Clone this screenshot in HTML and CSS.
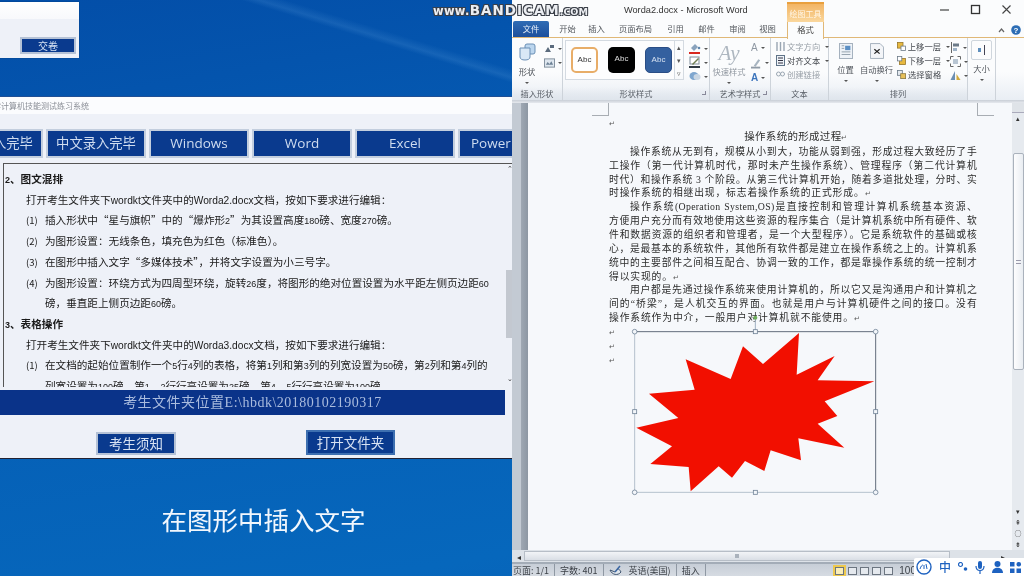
FILE: index.html
```html
<!DOCTYPE html>
<html lang="zh">
<head>
<meta charset="utf-8">
<title>Worda2.docx - Microsoft Word</title>
<link rel="stylesheet" href="styles.css">
</head>
<body>
<div class="desktop">
  <div class="swoosh"></div>

  <section class="dialog">
    <div class="dialog-top"></div>
    <div class="dialog-foot"><button class="btn btn-submit">交卷</button></div>
  </section>

  <section class="exam">
    <div class="exam-title">学计算机技能测试练习系统</div>
    <nav class="exam-tabs">
      <span class="etab etab-cn">英文录入完毕</span>
      <span class="etab etab-cn">中文录入完毕</span>
      <span class="etab">Windows</span>
      <span class="etab">Word</span>
      <span class="etab">Excel</span>
      <span class="etab etab-last">PowerPoint</span>
    </nav>
    <div class="task-box">
      <div class="task-text">
        <p class="h"><span class="la">2</span>、图文混排</p>
        <p class="b">打开考生文件夹下<span class="la-n">wordkt</span>文件夹中的<span class="la-n">Worda2.docx</span>文档，按如下要求进行编辑：</p>
        <div class="li"><i>(1)</i><span>插入形状中“星与旗帜”中的“爆炸形<span class="la">2</span>”为其设置高度<span class="la">180</span>磅、宽度<span class="la">270</span>磅。</span></div>
        <div class="li"><i>(2)</i><span>为图形设置：无线条色，填充色为红色（标准色）。</span></div>
        <div class="li"><i>(3)</i><span>在图形中插入文字“多媒体技术”，并将文字设置为小三号字。</span></div>
        <div class="li"><i>(4)</i><span>为图形设置：环绕方式为四周型环绕，旋转<span class="la">26</span>度，将图形的绝对位置设置为水平距左侧页边距<span class="la">60</span>磅，垂直距上侧页边距<span class="la">60</span>磅。</span></div>
        <p class="h"><span class="la">3</span>、表格操作</p>
        <p class="b">打开考生文件夹下<span class="la-n">wordkt</span>文件夹中的<span class="la-n">Worda3.docx</span>文档，按如下要求进行编辑：</p>
        <div class="li"><i>(1)</i><span>在文档的起始位置制作一个<span class="la">5</span>行<span class="la">4</span>列的表格，将第<span class="la">1</span>列和第<span class="la">3</span>列的列宽设置为<span class="la">50</span>磅，第<span class="la">2</span>列和第<span class="la">4</span>列的<br>列宽设置为<span class="la">100</span>磅，第<span class="la">1</span>、<span class="la">2</span>行行高设置为<span class="la">25</span>磅，第<span class="la">4</span>、<span class="la">5</span>行行高设置为<span class="la">100</span>磅。</span></div>
      </div>
      <div class="task-scroll">
        <span class="arr">⌃</span>
        <span class="thumb"></span>
        <span class="arr arr-down">⌄</span>
      </div>
    </div>
    <div class="path-bar">考生文件夹位置E:\hbdk\20180102190317</div>
    <div class="exam-actions">
      <button class="btn btn-notice">考生须知</button>
      <button class="btn btn-open">打开文件夹</button>
    </div>
  </section>

  <div class="caption">在图形中插入文字</div>

  <section class="word">
    <header class="w-title">
      <span class="w-name">Worda2.docx - Microsoft Word</span>
      <div class="win-ctrls">
        <svg width="12" height="12" viewBox="0 0 12 12"><path d="M1 6h9" stroke="#444" stroke-width="1.2"/></svg>
        <svg width="12" height="12" viewBox="0 0 12 12"><rect x="1.5" y="1.5" width="8" height="8" fill="none" stroke="#333" stroke-width="1.3"/></svg>
        <svg width="12" height="12" viewBox="0 0 12 12"><path d="M1.5 1.5l8 8M9.5 1.5l-8 8" stroke="#444" stroke-width="1.1"/></svg>
      </div>
    </header>
    <nav class="w-tabs">
      <span class="wt wt-file">文件</span>
      <span class="wt w29">开始</span><span class="wt w29">插入</span><span class="wt w49">页面布局</span><span class="wt w31">引用</span><span class="wt w31">邮件</span><span class="wt w31">审阅</span><span class="wt w29">视图</span>
      <span class="wt-ctx"><em>绘图工具</em><b>格式</b></span>
      <span class="wt-help">
        <svg width="7" height="6" viewBox="0 0 7 6"><path d="M1 5l2.5-3L6 5" fill="none" stroke="#666" stroke-width="1.2"/></svg>
        <svg width="10" height="10" viewBox="0 0 10 10"><circle cx="5" cy="5" r="4.8" fill="#2c6db5"/><text x="5" y="8" font-size="8" font-weight="700" text-anchor="middle" fill="#fff" font-family="Liberation Sans">?</text></svg>
      </span>
    </nav>
    <div class="ribbon">
      <div class="grp g-insert">
        <div class="grp-body">
          <div class="big">
            <svg width="18" height="18" viewBox="0 0 18 18"><rect x="7" y="1" width="10" height="10" rx="2" fill="#bcd6ee" stroke="#6a8fb5"/><path d="M2 5h10v9c0 2-2 3-5 3s-5-1-5-3z" fill="#d9e8f6" stroke="#6a8fb5"/></svg>
            <span>形状</span><u class="caret"></u>
          </div>
          <div class="ico-col">
            <span class="ico-row"><svg width="11" height="9" viewBox="0 0 11 9"><path d="M1 8l3-5 3 5zM6 1h4v3H6z" fill="#5b6b7d"/></svg><u class="caret"></u></span>
            <span class="ico-row"><svg width="12" height="10" viewBox="0 0 12 10"><rect x=".5" y=".5" width="11" height="9" fill="#dfe7ef" stroke="#7d8b99"/><path d="M2 7l2-3 2 2 2-3 2 4z" fill="#6e8296"/></svg><u class="caret"></u></span>
          </div>
        </div>
        <div class="grp-label">插入形状</div>
      </div>
      <div class="grp g-style">
        <div class="grp-body">
          <div class="gallery">
            <span class="abc abc-1">Abc</span><span class="abc abc-2">Abc</span><span class="abc abc-3">Abc</span>
          </div>
          <div class="spin"><span>▴</span><span>▾</span><span>▿</span></div>
          <div class="ico-col ico-col-s">
            <span class="ico-row"><svg width="12" height="12" viewBox="0 0 12 12"><path d="M2 6l4-4 3 3-4 4z" fill="#8aa3bd"/><circle cx="10" cy="6" r="1.3" fill="#5f87ad"/><rect x="0" y="10" width="11" height="2" fill="#d8281f"/></svg><u class="caret"></u></span>
            <span class="ico-row"><svg width="12" height="12" viewBox="0 0 12 12"><rect x="1" y="1" width="9" height="7" fill="#fff" stroke="#7f8c99"/><path d="M3 8l6-6 1 1-6 6z" fill="#6f7f52"/><rect x="0" y="10" width="11" height="2" fill="#2f3a44"/></svg><u class="caret"></u></span>
            <span class="ico-row"><svg width="12" height="10" viewBox="0 0 12 10"><ellipse cx="5" cy="5" rx="4.5" ry="4" fill="#7ea6cf"/><ellipse cx="8" cy="6" rx="3.5" ry="3" fill="#c9d6e3"/></svg><u class="caret"></u></span>
          </div>
        </div>
        <div class="grp-label">形状样式<i class="launch"></i></div>
      </div>
      <div class="grp g-art">
        <div class="grp-body">
          <div class="big big-dim">
            <span class="art-a">Ay</span>
            <span>快速样式</span><u class="caret"></u>
          </div>
          <div class="ico-col">
            <span class="ico-row art-i">A<u class="caret"></u></span>
            <span class="ico-row"><svg width="12" height="12" viewBox="0 0 12 12"><path d="M3 9l5-7 2 1-5 7z" fill="#a7b4c0"/><rect x="0" y="10" width="10" height="2" fill="#8f9aa6"/></svg><u class="caret"></u></span>
            <span class="ico-row art-i art-blue">A<u class="caret"></u></span>
          </div>
        </div>
        <div class="grp-label">艺术字样式<i class="launch"></i></div>
      </div>
      <div class="grp g-text">
        <div class="grp-body">
          <div class="rows">
            <span class="row dim"><svg width="9" height="11" viewBox="0 0 9 11"><path d="M1 1v9M4.500 1v9M8 1v9" stroke="#9aa6b2" stroke-width="1.400"/></svg>文字方向<u class="caret"></u></span>
            <span class="row"><svg width="9" height="11" viewBox="0 0 9 11"><rect x=".5" y=".5" width="8" height="10" fill="#eef3f8" stroke="#5f7388"/><path d="M2 3h5M2 5.500h5M2 8h5" stroke="#334"/></svg>对齐文本<u class="caret"></u></span>
            <span class="row dim"><svg width="9" height="7" viewBox="0 0 9 7"><rect x=".5" y="1" width="4" height="4" rx="2" fill="none" stroke="#9aa6b2"/><rect x="4.500" y="1" width="4" height="4" rx="2" fill="none" stroke="#9aa6b2"/></svg>创建链接</span>
          </div>
        </div>
        <div class="grp-label">文本</div>
      </div>
      <div class="grp g-arr">
        <div class="grp-body">
          <div class="big big-wide b-pos">
            <svg width="14" height="16" viewBox="0 0 16 18"><rect x=".5" y=".5" width="15" height="17" fill="#eef2f7" stroke="#9aa8b6"/><rect x="7" y="3" width="6" height="5" fill="#5b8fc4"/><path d="M3 3h3M3 6h3M3 10h10M3 13h10" stroke="#8a98a6"/></svg>
            <span>位置</span><u class="caret"></u>
          </div>
          <div class="big big-wide b-wrap">
            <svg width="14" height="16" viewBox="0 0 16 18"><path d="M.5.5h11l4 4v13H.5z" fill="#f3f5f8" stroke="#9aa8b6"/><path d="M5 7l6 5M11 7l-6 5" stroke="#222" stroke-width="1.400"/></svg>
            <span>自动换行</span><u class="caret"></u>
          </div>
          <div class="rows rows-arr">
            <span class="row"><svg width="9" height="9" viewBox="0 0 11 11"><rect x=".5" y=".5" width="7" height="7" fill="#e8b93f" stroke="#96762a"/><rect x="5" y="5" width="5.500" height="5.500" fill="#fff" stroke="#6c7a88"/></svg>上移一层<u class="caret"></u></span>
            <span class="row"><svg width="9" height="9" viewBox="0 0 11 11"><rect x="3" y="3" width="7.500" height="7.500" fill="#e8b93f" stroke="#96762a"/><rect x=".5" y=".5" width="5.500" height="5.500" fill="#fff" stroke="#6c7a88"/></svg>下移一层<u class="caret"></u></span>
            <span class="row"><svg width="9" height="9" viewBox="0 0 11 11"><rect x=".5" y=".5" width="6" height="6" fill="#e5eaf0" stroke="#6c7a88"/><rect x="4.500" y="4.500" width="6" height="6" fill="#e8c15a" stroke="#8b7a45"/></svg>选择窗格</span>
          </div>
          <div class="ico-col ico-col-arr">
            <span class="ico-row"><svg width="10" height="11" viewBox="0 0 10 11"><path d="M1.500 0v11" stroke="#666"/><rect x="3" y="1.500" width="6" height="3" fill="#6c7a88"/><rect x="3" y="6" width="4" height="3" fill="#9fb3c7"/></svg><u class="caret"></u></span>
            <span class="ico-row"><svg width="11" height="11" viewBox="0 0 11 11"><path d="M.5.5h3M7.500.5h3M.5 10.500h3M7.500 10.500h3M.5.5v3M10.500.5v3M.5 7.500v3M10.500 7.500v3" stroke="#666"/><rect x="3" y="3" width="5" height="5" fill="#b9c6d3"/></svg><u class="caret"></u></span>
            <span class="ico-row"><svg width="11" height="11" viewBox="0 0 11 11"><path d="M5 1v9H.5z" fill="#6c8fb3"/><path d="M6.500 4v6h4z" fill="#d0a93c"/></svg><u class="caret"></u></span>
          </div>
        </div>
        <div class="grp-label">排列</div>
      </div>
      <div class="grp g-size">
        <div class="grp-body">
          <div class="big b-size">
            <span class="size-box"><svg width="9" height="10" viewBox="0 0 9 10"><path d="M7.500 0v10" stroke="#445"/><rect x="1" y="3" width="3" height="4" fill="#5e8fbd"/></svg></span>
            <span>大小</span><u class="caret"></u>
          </div>
        </div>
      </div>
    </div>
    <div class="ribbon-shadow"></div>

    <div class="doc-area">
      <div class="gutter"><span class="gutter-in"></span></div>
      <div class="page">
        <div class="crop crop-l"></div>
        <div class="crop crop-r"></div>
        <div class="sheet">
          <div class="mark-line mark-first">↵</div>
          <div class="l l-title">操作系统的形成过程<small>↵</small></div>
          <div class="l l-j l-in">操作系统从无到有，规模从小到大，功能从弱到强，形成过程大致经历了手</div>
          <div class="l l-j">工操作（第一代计算机时代，那时未产生操作系统）、管理程序（第二代计算机</div>
          <div class="l l-j">时代）和操作系统 3 个阶段。从第三代计算机开始，随着多道批处理，分时、实</div>
          <div class="l">时操作系统的相继出现，标志着操作系统的正式形成。<small>↵</small></div>
          <div class="l l-j l-in">操作系统(Operation System,OS)是直接控制和管理计算机系统基本资源、</div>
          <div class="l l-j">方便用户充分而有效地使用这些资源的程序集合（是计算机系统中所有硬件、软</div>
          <div class="l l-j">件和数据资源的组织者和管理者，是一个大型程序）。它是系统软件的基础或核</div>
          <div class="l l-j">心，是最基本的系统软件，其他所有软件都是建立在操作系统之上的。计算机系</div>
          <div class="l l-j">统中的主要部件之间相互配合、协调一致的工作，都是靠操作系统的统一控制才</div>
          <div class="l">得以实现的。<small>↵</small></div>
          <div class="l l-j l-in">用户都是先通过操作系统来使用计算机的，所以它又是沟通用户和计算机之</div>
          <div class="l l-j">间的“桥梁”，是人机交互的界面。也就是用户与计算机硬件之间的接口。没有</div>
          <div class="l">操作系统作为中介，一般用户对计算机就不能使用。<small>↵</small></div>
          <div class="mark-line mark-gap">↵</div>
          <div class="mark-line">↵</div>
          <div class="mark-line">↵</div>
        </div>
        <svg class="burst" width="250" height="172" viewBox="350 20 750 516">
          <path class="stem" d="M729 -8v42"/>
          <circle class="rot" cx="729" cy="-8" r="6"/>
          <path class="fr-light" d="M367 34v482h723"/>
          <path class="fr-dark" d="M367 34h723v482"/>
          <polygon class="star" points="860,38 853,163 967,107 916,180 1086,183 937,243 975,287 916,310 996,382 858,354 866,420 775,390 756,452 698,422 659,472 619,438 535,513 529,440 414,431 479,378 372,322 498,293 410,220 547,208 520,117 655,176 692,78 752,131"/>
          <circle class="h" cx="367" cy="34" r="7"/><circle class="h" cx="1090" cy="34" r="7"/><circle class="h" cx="367" cy="516" r="7"/><circle class="h" cx="1090" cy="516" r="7"/>
          <rect class="h" x="723" y="28" width="12" height="12"/><rect class="h" x="723" y="510" width="12" height="12"/><rect class="h" x="361" y="268" width="12" height="12"/><rect class="h" x="1084" y="268" width="12" height="12"/>
        </svg>
      </div>
      <div class="vscroll">
        <span class="vs-top"></span>
        <span class="vs-arrow">▴</span>
        <span class="vs-thumb"><i></i></span>
        <span class="vs-fill"></span>
        <span class="vs-arrow">▾</span>
        <span class="vs-bot">⇞</span>
        <span class="vs-bot">○</span>
        <span class="vs-bot">⇟</span>
      </div>
    </div>

    <div class="hscroll">
      <span class="hs-arr">◂</span>
      <span class="hs-thumb"><i></i></span>
      <span class="hs-arr">▸</span>
    </div>
    <footer class="status">
      <span class="st">页面: 1/1</span>
      <span class="st">字数: 401</span>
      <span class="st st-lang">
        <svg width="14" height="12" viewBox="0 0 14 12"><path d="M1 5c2 5 8 6 11 2-1-2-2-3-3-3l-3 3z" fill="#dfe5ec" stroke="#3f5570"/><path d="M6 7l5-6" stroke="#3b67a3" stroke-width="1.500"/></svg>
        英语(美国)
      </span>
      <span class="st">插入</span>
      <span class="st-right">
        <span class="view view-on"></span><span class="view"></span><span class="view"></span><span class="view"></span><span class="view"></span>
        <span class="zoom">100</span>
      </span>
    </footer>
    <div class="ime">
      <svg width="16" height="16" viewBox="0 0 16 16"><circle cx="8" cy="8" r="7" fill="#fff" stroke="#1e62c0" stroke-width="1.400"/><path d="M4 10c1-3 2-4 3-4M8 6v4M10 5l1 5" stroke="#1e62c0" fill="none"/></svg>
      <span class="ime-zh">中</span>
      <svg width="10" height="10" viewBox="0 0 10 10"><circle cx="2.500" cy="2.500" r="2" fill="none" stroke="#1e62c0" stroke-width="1.200"/><circle cx="7.500" cy="7" r="1.800" fill="#1e62c0"/></svg>
      <svg width="10" height="13" viewBox="0 0 10 13"><rect x="3" y="0" width="4" height="8" rx="2" fill="#1e62c0"/><path d="M1 5c0 6 8 6 8 0M5 10v3" fill="none" stroke="#1e62c0" stroke-width="1.200"/></svg>
      <svg width="11" height="12" viewBox="0 0 11 12"><circle cx="5.500" cy="3" r="3" fill="#1e62c0"/><path d="M0 12c0-7 11-7 11 0z" fill="#1e62c0"/></svg>
      <svg width="11" height="11" viewBox="0 0 11 11"><rect width="4.500" height="4.500" fill="#1e62c0"/><rect x="6.500" width="4.500" height="4.500" rx="2" fill="#1e62c0"/><rect y="6.500" width="4.500" height="4.500" fill="#1e62c0"/><rect x="6.500" y="6.500" width="4.500" height="4.500" fill="#1e62c0"/></svg>
    </div>
  </section>

  <div class="bandicam"><span class="bc-s">www.</span>BANDICAM<span class="bc-c">.COM</span></div>
</div>
</body>
</html>
```

FILE: styles.css
```css
* { box-sizing: border-box; }
html, body { margin: 0; padding: 0; width: 1024px; height: 576px; overflow: hidden; }
body { font-family: "Noto Sans CJK SC", "Liberation Sans", sans-serif; color: #222; }
p { margin: 0; }
button { font-family: inherit; padding: 0; cursor: default; }
u { text-decoration: none; }
i, em { font-style: normal; }

.desktop {
  position: relative;
  width: 1024px;
  height: 576px;
  overflow: hidden;
  background: linear-gradient(170deg, #034ea8 0%, #055ab2 30%, #0667bc 85%, #0a60b6 100%);
  filter: blur(.3px);
}
.swoosh {
  position: absolute;
  left: 100px;
  top: -40px;
  width: 480px;
  height: 130px;
  background: linear-gradient(17deg, transparent 48%, rgba(130, 190, 240, .14) 50%, transparent 53%);
}

/* top-left dialog */
.dialog {
  position: absolute;
  left: 0;
  top: 2px;
  width: 79px;
  height: 56px;
  display: flex;
  flex-direction: column;
  background: #eef1f8;
  box-shadow: 0 0 1px rgba(0, 0, 0, .4);
}
.dialog-top { height: 17px; background: linear-gradient(#fff, #f8f9fc); }
.dialog-foot { flex: 1; display: flex; justify-content: flex-end; align-items: flex-end; padding: 0 3px 4px 0; }

.btn {
  background: #0a3a8e;
  color: #d7e2f3;
  border: 2px solid #b5c2d6;
  outline: 0;
}
.btn-submit { width: 56px; height: 17px; font-size: 10px; line-height: 13px; }

/* exam window */
.exam {
  position: absolute;
  left: 0;
  top: 96px;
  width: 512px;
  height: 363px;
  background: #eef1f8;
  border-top: 1px solid #1f4f95;
  border-bottom: 1px solid #223;
  display: flex;
  flex-direction: column;
  overflow: hidden;
}
.exam-title {
  height: 17px;
  background: #fbfcfe;
  color: #8a8e96;
  font-size: 8px;
  line-height: 17px;
  text-indent: -7px;
  white-space: nowrap;
}
.exam-tabs {
  display: flex;
  gap: 3px;
  margin: 15px 0 0 -57px;
  height: 29px;
  flex: none;
}
.etab {
  flex: none;
  width: 100px;
  height: 29px;
  background: #0a3a8e;
  color: #cfdcf0;
  border: 2px solid #c3cede;
  font-family: "Open Sans", "Liberation Sans", "Noto Sans CJK SC", sans-serif;
  font-size: 13.500px;
  line-height: 24px;
  text-align: center;
  white-space: nowrap;
  overflow: hidden;
}
.etab-cn { font-size: 13.300px; }
.etab-last { text-align: left; padding-left: 11px; }

.task-box {
  flex: none;
  margin: 5px 0 0 3px;
  height: 224px;
  border-top: 1px solid #555;
  border-left: 1px solid #555;
  display: flex;
  overflow: hidden;
}
.task-text {
  flex: none;
  width: 502px;
  height: 223px;
  padding: 5px 0 0 1px;
  font-size: 10.600px;
  line-height: 20.7px;
  color: #1a1a1a;
  overflow: hidden;
}
.la { font-family: "Liberation Sans", sans-serif; font-size: 9px; line-height: 0; }
.la-n { font-family: "Liberation Sans", sans-serif; font-size: 10.200px; line-height: 0; }
.task-text .h { font-weight: 700; }
.task-text .b { padding-left: 21px; }
.li { display: flex; padding-left: 21px; }
.li i { flex: none; width: 19px; font-size: 9.500px; }
.li > span { flex: 1; }
.task-scroll {
  flex: none;
  width: 7px;
  background: #eef1f8;
  display: flex;
  flex-direction: column;
  align-items: center;
  font-size: 7px;
  color: #333;
  line-height: 8px;
}
.task-scroll .arr { height: 7px; flex: none; }
.task-scroll .thumb { margin-top: 99px; width: 7px; height: 68px; background: #c3c8d0; flex: none; }
.task-scroll .arr-down { margin-top: auto; margin-bottom: 6px; }

.path-bar {
  flex: none;
  margin-top: 3px;
  width: 505px;
  height: 25px;
  background: #0a3389;
  color: #aabcde;
  font-family: "Liberation Serif", "Noto Sans CJK SC", serif;
  font-size: 14px;
  line-height: 25px;
  letter-spacing: .5px;
  text-align: center;
}
.exam-actions {
  flex: 1;
  display: flex;
  align-items: flex-end;
  padding: 0 0 3px 96px;
  gap: 130px;
}
.btn-notice { width: 80px; height: 23px; font-size: 13.500px; line-height: 17px; }
.btn-open { width: 89px; height: 25px; font-size: 13.500px; line-height: 19px; border-color: #3d6fb0; }

.caption {
  position: absolute;
  left: 160px;
  top: 501px;
  width: 207px;
  text-align: center;
  color: #f2f7fd;
  font-size: 25.500px;
  line-height: 36px;
  white-space: nowrap;
}

.bandicam {
  position: absolute;
  left: 433px;
  top: 3px;
  color: #eceef2;
  font-family: "DejaVu Sans", "Liberation Sans", sans-serif;
  font-weight: 700;
  font-size: 13.500px;
  line-height: 15px;
  letter-spacing: 1px;
  white-space: nowrap;
  text-shadow: 1px 1px 0 #3a3f48, -1px 1px 0 #3a3f48, 1px -1px 0 #3a3f48, -1px -1px 0 #3a3f48;
}
.bc-s { font-size: 11.500px; letter-spacing: .3px; }
.bc-c { font-size: 9.500px; letter-spacing: 0; }

/* word window */
.word {
  position: absolute;
  left: 512px;
  top: 0;
  width: 512px;
  height: 576px;
  background: #f6f8fb;
  display: flex;
  flex-direction: column;
  overflow: hidden;
}
.w-title {
  flex: none;
  height: 21px;
  position: relative;
  padding-left: 112px;
  font-family: "Liberation Sans", sans-serif;
  font-size: 9.200px;
  line-height: 20px;
  color: #333;
  background: #fbfcfd;
}
.win-ctrls {
  position: absolute;
  right: 11px;
  top: 4px;
  display: flex;
  gap: 19px;
}
.w-tabs {
  flex: none;
  height: 17px;
  display: flex;
  align-items: flex-end;
  position: relative;
  background: #fbfcfd;
  border-bottom: 1px solid #e0b877;
  font-size: 8.300px;
  color: #55595f;
}
.wt { height: 16px; line-height: 15px; text-align: center; flex: none; }
.wt-file {
  width: 36px;
  margin: 0 4px 0 1px;
  background: linear-gradient(#2f6cb5, #1d4f9c);
  color: #e8f0fa;
  border-radius: 2px 2px 0 0;
}
.w29 { width: 29px; }
.w49 { width: 49px; }
.w31 { width: 31px; }
.wt-ctx {
  position: absolute;
  left: 275px;
  top: -19px;
  width: 37px;
  height: 37px;
  display: flex;
  flex-direction: column;
  z-index: 2;
}
.wt-ctx em {
  flex: none;
  height: 20px;
  background: linear-gradient(#f2b565, #fad79d);
  color: #fff6e6;
  font-size: 8px;
  line-height: 20px;
  text-align: center;
  border-top: 2px solid #e9a03e;
}
.wt-ctx b {
  flex: 1;
  font-weight: 400;
  background: #fbfcfd;
  color: #444;
  text-align: center;
  line-height: 15px;
  border-left: 1px solid #e0b877;
  border-right: 1px solid #e0b877;
}
.wt-help {
  margin-left: auto;
  display: flex;
  align-items: center;
  gap: 6px;
  padding: 0 3px 2px 0;
}

.ribbon {
  flex: none;
  height: 62px;
  display: flex;
  background: linear-gradient(#fbfcfd 55%, #e9eef4);
  font-size: 8.300px;
  color: #50555c;
}
.grp {
  flex: none;
  display: flex;
  flex-direction: column;
  border-right: 1px solid #cdd3da;
}
.grp-body { flex: 1; display: flex; min-height: 0; padding-top: 2px; }
.grp-label {
  flex: none;
  height: 13px;
  line-height: 12px;
  text-align: center;
  font-size: 8.200px;
  color: #5a6068;
  position: relative;
  background: linear-gradient(rgba(225, 232, 240, 0), #dfe5ec);
}
.launch {
  position: absolute;
  right: 3px;
  top: 4px;
  width: 4px;
  height: 4px;
  border-right: 1px solid #889;
  border-bottom: 1px solid #889;
}
.g-insert { width: 51px; }
.g-style { width: 147px; }
.g-art { width: 61px; }
.g-text { width: 58px; }
.g-arr { width: 139px; }
.g-size { width: 28px; }
.big {
  flex: none;
  width: 30px;
  display: flex;
  flex-direction: column;
  align-items: center;
  padding-top: 3px;
  line-height: 11px;
  white-space: nowrap;
}
.big svg { margin-bottom: 5px; }
.big-dim { color: #9097a0; width: 36px; margin-left: 1px; }
.art-a {
  font-family: "Liberation Serif", serif;
  font-style: italic;
  font-size: 21px;
  line-height: 20px;
  height: 23px;
  color: #aeb7c0;
}
.caret {
  display: inline-block;
  flex: none;
  width: 0;
  height: 0;
  border: 2px solid transparent;
  border-top: 2px solid #555;
  border-bottom: 0;
  margin: 1px 0 0 3px;
}
.big .caret { margin: 5px 0 0; }
.ico-col {
  flex: none;
  display: flex;
  flex-direction: column;
  gap: 3px;
  padding: 3px 0 0 2px;
  width: 20px;
}
.ico-row { display: flex; align-items: center; height: 11px; }
.gallery {
  flex: none;
  margin: 0 0 0 2px;
  width: 110px;
  height: 40px;
  border: 1px solid #d4dae1;
  background: #fdfdfe;
  display: flex;
  gap: 10px;
  padding: 6px 0 0 5px;
}
.abc {
  flex: none;
  width: 27px;
  height: 26px;
  border-radius: 5px;
  font-family: "Liberation Sans", sans-serif;
  font-size: 8px;
  line-height: 24px;
  text-align: center;
}
.abc-1 { background: #fff; border: 2px solid #e8ad68; color: #333; line-height: 22px; }
.abc-2 { background: #000; color: #ddd; }
.abc-3 { background: #34609f; border: 1px solid #2a4d85; color: #d7e2f2; }
.spin {
  flex: none;
  width: 9px;
  height: 40px;
  display: flex;
  flex-direction: column;
  font-size: 7px;
  line-height: 13px;
  text-align: center;
  color: #555;
  border: 1px solid #d4dae1;
  border-left: 0;
}
.ico-col-s { width: 25px; padding: 2px 0 0 5px; gap: 2px; }
.ico-col-s .ico-row { height: 12px; }
.g-art .ico-col { width: 22px; padding: 1px 0 0 4px; gap: 2px; }
.g-art .ico-row { height: 13px; }
.art-i { font-family: "Liberation Sans", sans-serif; font-size: 10px; color: #8f98a3; }
.art-blue { color: #3e76bd; font-weight: 700; }
.rows {
  flex: none;
  display: flex;
  flex-direction: column;
  padding-top: 1px;
  gap: 3px;
  line-height: 11px;
}
.row { display: flex; align-items: center; gap: 2px; height: 11px; white-space: nowrap; color: #45494f; padding-left: 5px; }
.row.dim { color: #9aa1a9; }
.b-pos { width: 29px; margin-left: 2px; padding-top: 3px; }
.b-wrap { width: 33px; padding-top: 3px; margin-right: 2px; }
.rows-arr { width: 55px; }
.rows-arr .row { padding-left: 2px; }
.ico-col-arr { width: 20px; padding: 2px 0 0 0; }
.b-size { width: 27px; padding-top: 0; }
.size-box {
  width: 21px;
  height: 20px;
  background: #fcfcfd;
  border: 1px solid #cfd6dd;
  border-radius: 2px;
  display: flex;
  align-items: center;
  justify-content: center;
  margin-bottom: 3px;
}
.size-box svg { margin: 0; }

.ribbon-shadow { flex: none; height: 3px; background: linear-gradient(#c9ced6, #e6e9ee); }

/* document */
.doc-area { flex: none; height: 447px; display: flex; }
.gutter {
  flex: none;
  width: 16px;
  background: #c3cad3;
  display: flex;
  justify-content: flex-end;
}
.gutter-in { width: 7px; background: linear-gradient(90deg, #9fa8b3, #8d97a3); }
.page {
  flex: none;
  width: 484px;
  background: #f6f8fb;
  position: relative;
  overflow: hidden;
}
.crop {
  position: absolute;
  top: 0;
  width: 17px;
  height: 13px;
  border-bottom: 1px solid #a8adb3;
}
.crop-l { left: 64px; border-right: 1px solid #a8adb3; }
.crop-r { left: 449px; border-left: 1px solid #a8adb3; }
.sheet { padding: 15px 0 0 81px; width: 449px; }
.l {
  height: 13.870px;
  line-height: 14px;
  font-family: "Liberation Serif", "Noto Sans CJK SC", serif;
  font-size: 9.800px;
  letter-spacing: .85px;
  color: #2c2c2c;
  white-space: nowrap;
}
.l small { font-size: 7px; color: #555; }
.l-j { letter-spacing: .3px; text-align: justify; text-align-last: justify; white-space: normal; }
.l-in { padding-left: 21px; }
.l-title { text-align: center; height: 15px; padding-left: 6px; font-size: 10.500px; letter-spacing: .3px; }
.mark-line { height: 13.870px; line-height: 13px; font-size: 7px; color: #555; font-family: "DejaVu Sans", sans-serif; }
.mark-first { height: 11.870px; }
.mark-gap { margin-top: 2px; }
.burst {
  position: absolute;
  left: 100.500px;
  top: 223.700px;
  overflow: visible;
}
.star { fill: #f20f00; }
.fr-light { fill: none; stroke: #a4b2c0; stroke-width: 2.400; }
.fr-dark { fill: none; stroke: #3e4a5c; stroke-width: 2.400; }
.stem { stroke: #9fb0c2; stroke-width: 3; fill: none; }
.rot { fill: #6fae5c; }
.h { fill: #f3f6fa; stroke: #6f8296; stroke-width: 2.400; }
.vscroll {
  flex: none;
  width: 12px;
  background: #e6eaef;
  display: flex;
  flex-direction: column;
  align-items: center;
  font-size: 7px;
  color: #333;
  line-height: 10px;
}
.vs-top { height: 10px; flex: none; width: 100%; background: #dfe3e8; border-bottom: 1px solid #aab; }
.vs-arrow { height: 11px; flex: none; }
.vs-thumb {
  width: 11px;
  flex: none;
  margin-top: 29px;
  height: 217px;
  background: linear-gradient(90deg, #fdfdfe, #e9edf2);
  border: 1px solid #aab2bc;
  border-radius: 2px;
  display: flex;
  align-items: center;
  justify-content: center;
}
.vs-thumb i { width: 5px; height: 4px; border-top: 1px solid #99a; border-bottom: 1px solid #99a; }
.vs-fill { flex: 1; }
.vs-bot { height: 11px; flex: none; font-size: 7px; }

.hscroll {
  flex: none;
  height: 12px;
  background: #dde2e8;
  display: flex;
  align-items: center;
  font-size: 8px;
  color: #333;
  padding: 0 11px 0 1px;
}
.hs-arr { width: 11px; flex: none; text-align: center; }
.hs-thumb {
  width: 426px;
  height: 10px;
  background: linear-gradient(#f2f4f7, #d9dee5);
  border: 1px solid #b7bec7;
  display: flex;
  align-items: center;
  justify-content: center;
  margin-right: 47px;
}
.hs-thumb i { width: 4px; height: 4px; background: #aab2bc; }
.status {
  flex: 1;
  display: flex;
  align-items: center;
  background: linear-gradient(#c7ced7, #d7dce3);
  border-top: 2px solid #a3acb7;
  font-size: 9px;
  color: #3d4249;
  white-space: nowrap;
}
.st { padding: 0 5px; line-height: 13px; border-right: 1px solid #8f98a3; display: flex; align-items: center; gap: 6px; }
.st:first-child { padding-left: 1px; }
.st-right { margin-left: auto; display: flex; align-items: center; gap: 3px; padding-right: 108px; }
.view { width: 9px; height: 8px; border: 1px solid #6c7580; background: #e5e9ee; }
.view-on { outline: 2px solid #eec94e; background: #fbeeb8; margin-right: 1px; }
.zoom { font-family: "Liberation Sans", sans-serif; font-size: 10px; margin-left: 3px; }
.ime {
  position: absolute;
  right: 0;
  bottom: 0;
  width: 110px;
  height: 18px;
  background: #fff;
  display: flex;
  align-items: center;
  gap: 7px;
  padding: 0 0 0 2px;
  color: #1e62c0;
  border-radius: 2px 0 0 0;
}
.ime-zh { font-size: 12px; font-weight: 500; line-height: 14px; }
```
